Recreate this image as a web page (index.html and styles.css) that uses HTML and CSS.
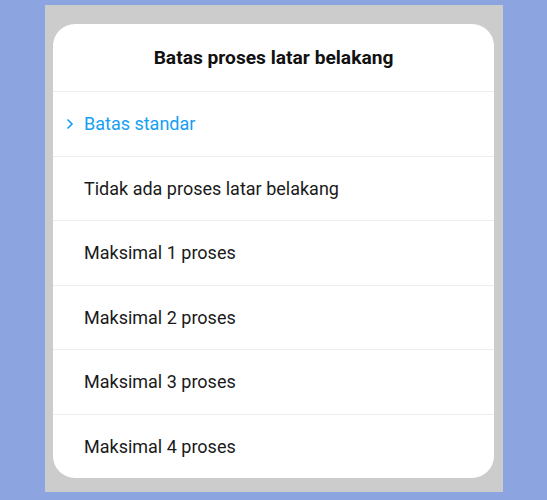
FILE: index.html
```html
<!DOCTYPE html>
<html lang="id">
<head>
  <meta charset="UTF-8">
  <title>Batas proses latar belakang</title>
  <link rel="stylesheet" href="styles.css">
</head>
<body>

  <div class="screen">
    <div class="dialog">
      <div class="dialog-title">Batas proses latar belakang</div>

      <!-- Options -->
      <div class="option selected">
        <svg class="check" width="8" height="12" viewBox="0 0 8 12">
          <path d="M1.5 1.5 L6 6 L1.5 10.5" fill="none" stroke="#15a0f5" stroke-width="1.6"/>
        </svg>
        Batas standar
      </div>
      <div class="option">Tidak ada proses latar belakang</div>
      <div class="option">Maksimal 1 proses</div>
      <div class="option">Maksimal 2 proses</div>
      <div class="option">Maksimal 3 proses</div>
      <div class="option">Maksimal 4 proses</div>
    </div>
  </div>

</body>
</html>
```

FILE: styles.css
```css
body {
  margin: 0;
  background: #8ca5e0;
  font-family: Roboto, "Liberation Sans", sans-serif;
}
.screen {
  width: 458px;
  height: 487px;
  margin: 5px 0 0 45px;
  padding: 19px 0 0 8px;
  box-sizing: border-box;
  background: #cccccc;
}
.dialog {
  width: 441px;
  height: 454px;
  background: white;
  border-radius: 22px;
  overflow: hidden;
}
.dialog-title {
  height: 67px;
  display: flex;
  align-items: center;
  justify-content: center;
  font-size: 19.2px;
  font-weight: bold;
  color: #111;
}
.option {
  position: relative;
  height: 63.5px;
  display: flex;
  align-items: center;
  padding-left: 31px;
  border-top: 1px solid #ededed;
  font-size: 18px;
  color: #1a1a1a;
}
.option.selected {
  color: #15a0f5;
}
.check {
  position: absolute;
  left: 13px;
  top: 26px;
}
```
